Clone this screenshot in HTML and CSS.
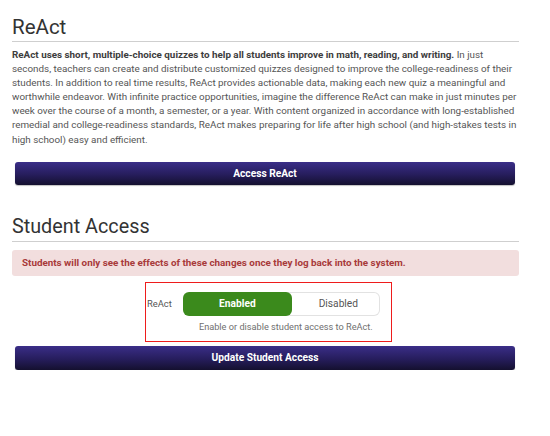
FILE: index.html
```html
<!DOCTYPE html>
<html lang="en">
<head>
<meta charset="utf-8">
<title>ReAct</title>
<link rel="stylesheet" href="styles.css">
</head>
<body>
<main class="page">
  <section class="section">
    <h1 class="section-title">ReAct</h1>
    <p class="intro"><strong>ReAct uses short, multiple-choice quizzes to help all students improve in math, reading, and writing.</strong> In just seconds, teachers can create and distribute customized quizzes designed to improve the college-readiness of their students. In addition to real time results, ReAct provides actionable data, making each new quiz a meaningful and worthwhile endeavor. With infinite practice opportunities, imagine the difference ReAct can make in just minutes per week over the course of a month, a semester, or a year. With content organized in accordance with long-established remedial and college-readiness standards, ReAct makes preparing for life after high school (and high-stakes tests in high school) easy and efficient.</p>
    <button class="btn-primary btn-access" type="button">Access ReAct</button>
  </section>
  <section class="section section-access">
    <h2 class="section-title">Student Access</h2>
    <div class="alert">Students will only see the effects of these changes once they log back into the system.</div>
    <div class="access-box">
      <span class="access-label">ReAct</span>
      <div class="access-control">
        <div class="toggle">
          <span class="toggle-opt toggle-on">Enabled</span>
          <span class="toggle-opt toggle-off">Disabled</span>
        </div>
        <div class="help">Enable or disable student access to ReAct.</div>
      </div>
    </div>
    <button class="btn-primary btn-update" type="button">Update Student Access</button>
  </section>
</main>
</body>
</html>
```

FILE: styles.css
```css
* { box-sizing: border-box; }
html, body { margin: 0; padding: 0; background: #ffffff; }
body {
  font-family: Roboto, "Liberation Sans", Arial, sans-serif;
  color: #4a4a4a;
}
.page {
  width: 507px;
  margin-left: 12px;
  padding-top: 15px;
}
.section-title {
  margin: 0;
  font-size: 20.5px;
  line-height: 24px;
  font-weight: 400;
  color: #333333;
  padding-bottom: 2px;
  border-bottom: 1.5px solid #cfcfcf;
}
.intro {
  margin: 6px 0 0 0;
  font-size: 9.85px;
  line-height: 14.1px;
  color: #555555;
}
.intro strong { color: #3d3d3d; font-weight: 700; }
.btn-primary {
  display: block;
  width: 500px;
  margin: 0 0 0 3px;
  height: 23px;
  border: none;
  border-radius: 3px;
  background: linear-gradient(to bottom, #3a2e88 0%, #261d5c 55%, #14102f 100%);
  color: #ffffff;
  font-family: Roboto, "Liberation Sans", Arial, sans-serif;
  font-size: 10.2px;
  font-weight: 700;
  padding: 0;
  box-shadow: 0 1px 1px rgba(0,0,0,0.25);
}
.btn-access { margin-top: 15px; }
.section-access { margin-top: 30px; }
.section-access .section-title { font-size: 19.8px; }
.alert {
  margin-top: 8px;
  height: 26px;
  padding: 0 10px;
  display: flex;
  align-items: center;
  background: #f2dede;
  border-radius: 3px;
  color: #a83a3a;
  font-size: 9.85px;
  font-weight: 700;
}
.access-box {
  width: 247px;
  margin: 6px 0 0 133px;
  border: 1.5px solid #ee1c1c;
  padding: 9px 10px 9px 1px;
  display: flex;
  gap: 11px;
}
.access-label {
  font-size: 9.4px;
  color: #555555;
  padding-top: 6px;
}
.access-control {
  display: flex;
  flex-direction: column;
  align-items: center;
}
.toggle {
  display: flex;
  width: 197px;
  height: 24px;
}
.toggle-opt {
  display: flex;
  align-items: center;
  justify-content: center;
  font-size: 10.2px;
}
.toggle-on {
  width: 109px;
  background: #3b8a1c;
  color: #ffffff;
  font-weight: 700;
  border-radius: 6px;
  position: relative;
  z-index: 1;
}
.toggle-off {
  flex: 1;
  margin-left: -6px;
  padding-left: 12px;
  border: 1px solid #e2e2e2;
  border-left: none;
  border-radius: 0 6px 6px 0;
  color: #555555;
  background: #ffffff;
}
.help {
  margin-top: 5px;
  font-size: 9.2px;
  color: #6f6f6f;
  padding-left: 9px;
}
.btn-update { margin-top: 4px; height: 24px; }
```
